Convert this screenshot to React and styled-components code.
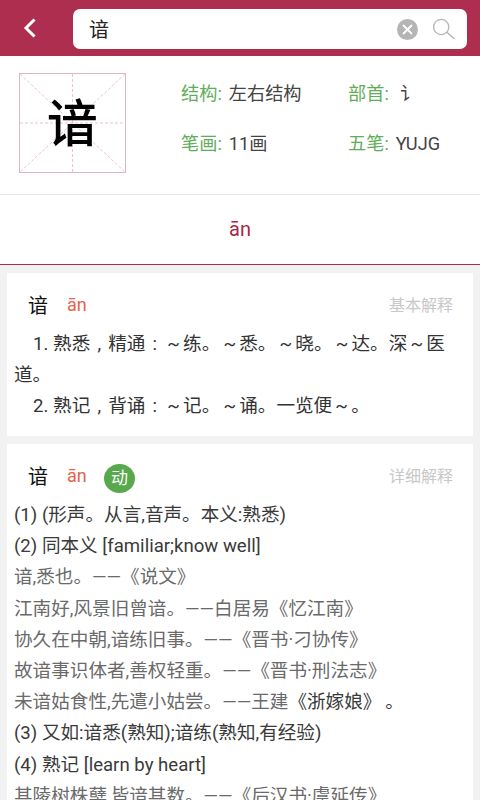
import React from 'react';
import styled, { createGlobalStyle } from 'styled-components';

const GlobalStyle = createGlobalStyle`
  html, body { margin: 0; padding: 0; background: #f2f2f2; }
  body { font-family: Roboto, "Noto Sans CJK SC", sans-serif; }
`;

const Page = styled.div`
  width: 480px;
  height: 800px;
  overflow: hidden;
  background: #f2f2f2;
`;

const Header = styled.header`
  height: 56px;
  box-sizing: border-box;
  padding: 9px 13px 7px 0;
  display: flex;
  align-items: stretch;
  background: #ad2e4e;
`;

const BackButton = styled.div`
  width: 73px;
  box-sizing: border-box;
  padding: 0 13px 2px 0;
  display: flex;
  align-items: center;
  justify-content: center;
`;

const SearchBar = styled.div`
  flex: 1;
  display: flex;
  align-items: center;
  background: #fff;
  border-radius: 7px;
  padding: 0 12px 0 16px;
`;

const SearchText = styled.div`
  flex: 1;
  padding-bottom: 2px;
  font-size: 20px;
  color: #222;
`;

const ClearIcon = styled.div`
  width: 21px;
  height: 21px;
  margin-right: 15px;
  border-radius: 50%;
  background: #b5b5b5;
  display: flex;
  align-items: center;
  justify-content: center;
`;

const SearchIcon = styled.svg`
  width: 22px;
  height: 22px;
`;

const InfoPanel = styled.section`
  height: 139px;
  box-sizing: border-box;
  padding: 17px 0 0 19px;
  display: flex;
  background: #fff;
  border-bottom: 1px solid #e6e6e6;
`;

const CharBox = styled.div`
  position: relative;
  width: 107px;
  height: 100px;
  box-sizing: border-box;
  border: 1px solid #e3b4c2;
  display: flex;
  align-items: center;
  justify-content: center;
`;

const CharGrid = styled.svg`
  position: absolute;
  inset: 0;
  width: 100%;
  height: 100%;
`;

const BigChar = styled.div`
  position: relative;
  padding-top: 2px;
  font-size: 51px;
  line-height: 1;
  font-weight: 500;
  color: #000;
`;

const InfoGrid = styled.div`
  margin-left: 55px;
  padding-top: 6px;
  display: grid;
  grid-template-columns: 167px auto;
  grid-auto-rows: 50px;
  align-content: start;
`;

const InfoItem = styled.div`
  display: flex;
  align-items: baseline;
  height: 29px;
  font-size: 18.2px;
  line-height: 29px;
  color: #444;
`;

const InfoLabel = styled.span`
  color: #62ad5a;
  margin-right: 7px;
`;

const TabBar = styled.div`
  height: 70px;
  box-sizing: border-box;
  display: flex;
  align-items: center;
  justify-content: center;
  padding-bottom: 1px;
  background: #fff;
  border-bottom: 1px solid #ab2c4b;
  font-size: 20px;
  color: #a8274a;
`;

const Cards = styled.div`
  padding: 8px 7px 0;
  display: flex;
  flex-direction: column;
  gap: 8px;
`;

const Card = styled.article`
  background: #fff;
  padding: 0 7px;
  height: ${(p) => p.$height || 'auto'};
`;

const CardHead = styled.div`
  display: flex;
  align-items: center;
  height: 56px;
  box-sizing: border-box;
  padding: 6px 13px 0 14px;
`;

const HeadChar = styled.span`
  font-size: 20px;
  color: #111;
  width: 39px;
`;

const HeadPinyin = styled.span`
  font-size: 18px;
  color: #e8604f;
  width: 37px;
`;

const PosBadge = styled.span`
  width: 31px;
  height: 29px;
  box-sizing: border-box;
  margin-top: 6px;
  padding-bottom: 4px;
  border-radius: 50%;
  background: #58a84e;
  color: #fff;
  font-size: 17px;
  display: flex;
  align-items: center;
  justify-content: center;
`;

const HeadKind = styled.span`
  margin-left: auto;
  font-size: 16px;
  color: #c8c8c8;
`;

// word-spacing opens the spaces round the comma and colon to a full cell
const BasicLine = styled.p`
  margin: 0;
  font-size: 18.6px;
  line-height: 31.2px;
  color: #333;
  text-indent: 19px;
  word-spacing: 2.5px;
`;

const DetailLine = styled.p`
  margin: 0;
  font-size: 18.6px;
  line-height: 31.2px;
  white-space: nowrap;
  color: ${(p) => (p.$quote ? '#6a6a6a' : '#3a3a3a')};
`;

const Cite = styled.span`
  color: #3a3a3a;
`;

const detailLines = [
  { text: '(1) (形声。从言,音声。本义:熟悉)' },
  { text: '(2) 同本义 [familiar;know well]' },
  { text: '谙,悉也。——《说文》', quote: true },
  { text: '江南好,风景旧曾谙。——白居易《忆江南》', quote: true },
  { text: '协久在中朝,谙练旧事。——《晋书·刁协传》', quote: true },
  { text: '故谙事识体者,善权轻重。——《晋书·刑法志》', quote: true },
  { text: '未谙姑食性,先遣小姑尝。——王建', cite: '《浙嫁娘》\u2009。', quote: true },
  { text: '(3) 又如:谙悉(熟知);谙练(熟知,有经验)' },
  { text: '(4) 熟记 [learn by heart]' },
  { text: '其陵树株蘖,皆谙其数。——《后汉书·虞延传》', quote: true },
];

// small tilde padded out to a full cell with six-per-em spaces
const tilde = (text) => text.replaceAll('~', '\u2006~\u2006');

const App = () => {
  return (
    <Page>
      <GlobalStyle />
      <Header>
        <BackButton>
          <svg width="14" height="22" viewBox="0 0 14 22">
            <path d="M11.5 2.5 3 11l8.5 8.5" fill="none" stroke="#fff" strokeWidth="3" />
          </svg>
        </BackButton>
        <SearchBar>
          <SearchText>谙</SearchText>
          <ClearIcon>
            <svg width="11" height="11" viewBox="0 0 11 11">
              <path d="M1 1l9 9M10 1l-9 9" stroke="#fff" strokeWidth="1.8" />
            </svg>
          </ClearIcon>
          <SearchIcon viewBox="0 0 22 22">
            <circle cx="8.2" cy="9" r="7.6" fill="none" stroke="#b5b5b5" strokeWidth="1.3" />
            <path d="M13.8 14.2l7.5 6.6" fill="none" stroke="#b5b5b5" strokeWidth="1.5" />
          </SearchIcon>
        </SearchBar>
      </Header>

      <InfoPanel>
        <CharBox>
          <CharGrid viewBox="0 0 105 98" preserveAspectRatio="none">
            <path
              d="M0 0 105 98M105 0 0 98M52.5 0v98M0 49h105"
              fill="none"
              stroke="#e3b4c2"
              strokeWidth="0.8"
              strokeDasharray="3 2"
            />
          </CharGrid>
          <BigChar>谙</BigChar>
        </CharBox>
        <InfoGrid>
          <InfoItem><InfoLabel>结构:</InfoLabel>左右结构</InfoItem>
          <InfoItem><InfoLabel>部首:</InfoLabel>&nbsp;讠</InfoItem>
          <InfoItem><InfoLabel>笔画:</InfoLabel>11画</InfoItem>
          <InfoItem><InfoLabel>五笔:</InfoLabel>YUJG</InfoItem>
        </InfoGrid>
      </InfoPanel>

      <TabBar>ān</TabBar>

      <Cards>
        <Card $height="163px">
          <CardHead>
            <HeadChar>谙</HeadChar>
            <HeadPinyin>ān</HeadPinyin>
            <HeadKind>基本解释</HeadKind>
          </CardHead>
          <BasicLine>{tilde('1.\u2005熟悉 , 精通 : ~练。~悉。~晓。~达。深~医道。')}</BasicLine>
          <BasicLine>{tilde('2.\u2005熟记 , 背诵 : ~记。~诵。一览便~。')}</BasicLine>
        </Card>
        <Card>
          <CardHead>
            <HeadChar>谙</HeadChar>
            <HeadPinyin>ān</HeadPinyin>
            <PosBadge>动</PosBadge>
            <HeadKind>详细解释</HeadKind>
          </CardHead>
          {detailLines.map((line) => (
            <DetailLine key={line.text} $quote={line.quote}>
              {line.text}
              {line.cite && <Cite>{line.cite}</Cite>}
            </DetailLine>
          ))}
        </Card>
      </Cards>
    </Page>
  );
};

export default App;
